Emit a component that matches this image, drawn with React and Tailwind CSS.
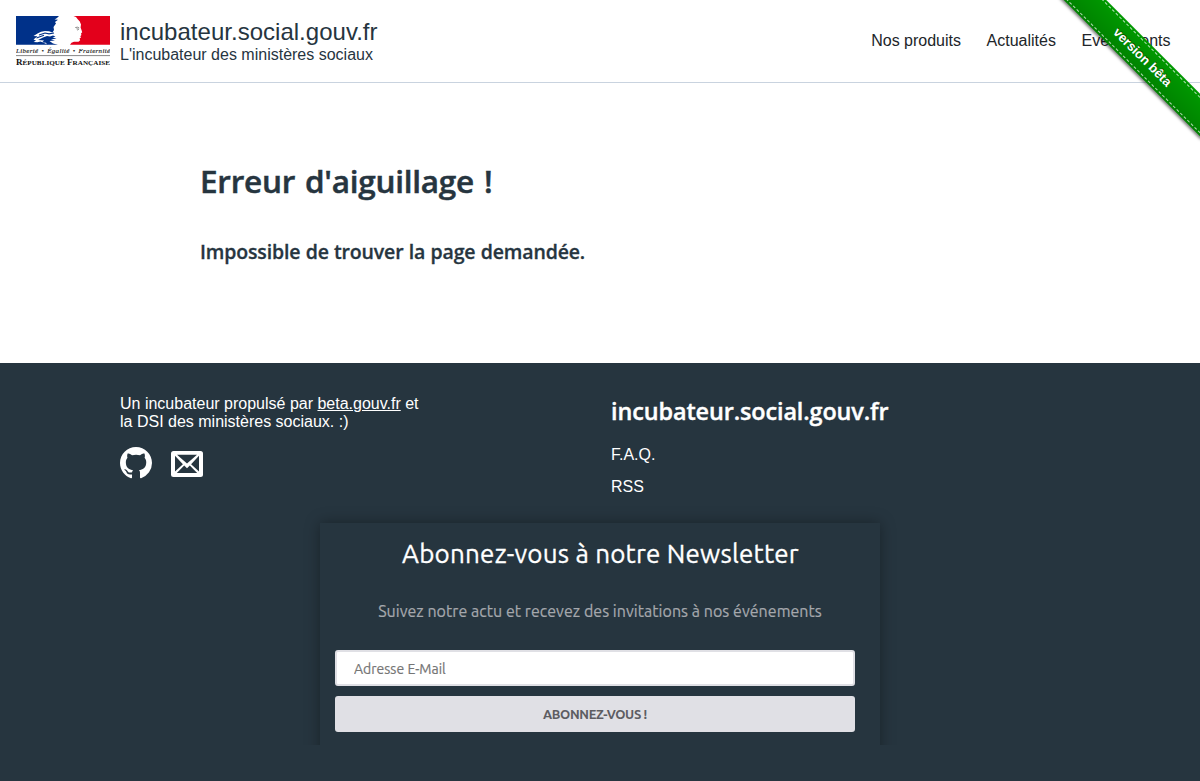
import React from "react";

const sans = "font-['Liberation_Sans',Arial,sans-serif]";
const heading = "font-['Trebuchet_MS','Open_Sans',sans-serif] font-semibold";

function Logo() {
  return (
    <svg width="94" height="51" viewBox="0 0 94 51" className="shrink-0" role="img" aria-label="République Française">
      <path fill="#003189" d="M0 0H43L41 2L38.5 3.5L42 3.8L39 6L40 7.5L37.5 11L38 14L36.5 16.5L33 15.2L29 15L25 15.8L21.5 17.5L17.5 20L21.5 20.3L17.5 23.5L20 24.5L17.5 26L21.5 26.3L24.5 25.5L28 27L32 28.8H0Z" />
      <path fill="#003189" d="M22 24L27 21.5L31 20L34 20.5L37 19.5L39.5 20.5L36.5 21.5L40.5 22.5L35 23.5L39 24.5L33.5 25L37 27.5L42 28.8H31L30 26.8L26 26.5L28 24.5Z" />
      <path fill="none" stroke="#003189" strokeWidth="1.2" d="M23 19L29 17L33 17.8L38 17M20.5 22L28 19.3" />
      <path fill="#e3001b" d="M57.5 0H94V28.8H54L55.5 26.8L58 25.7L62.5 25.7L64.2 24.3L63.5 22.5L65 21.5L64.3 20.2L65.4 19L65 17.5L66.2 16.3L65.5 14L64.6 11.5L65 8.5L63.8 5.5L61.5 3L60 1Z" />
      <path fill="none" stroke="#777" strokeWidth=".9" d="M59.3 11.5L61.5 11.2L63.2 12M60.5 12.8L62.7 13.2L61.5 14.2" />
      <text x="0" y="37" fontFamily="Liberation Serif, serif" fontStyle="italic" fontSize="6.9" wordSpacing="1" textLength="94" stroke="#222" strokeWidth=".15" fill="#222">
        Liberté • Égalité • Fraternité
      </text>
      <path stroke="#555" strokeWidth=".7" d="M0 39.6H94" />
      <text x="0" y="48.9" fontFamily="Liberation Serif, serif" fontWeight="700" fontSize="8.6" textLength="94" lengthAdjust="spacingAndGlyphs" fill="#111">
        R<tspan fontSize="6.8">ÉPUBLIQUE</tspan> F<tspan fontSize="6.8">RANÇAISE</tspan>
      </text>
    </svg>
  );
}

function Ribbon() {
  return (
    <div className="pointer-events-none absolute top-0 right-0 h-[12.1em] w-[12.1em] overflow-hidden text-[13px]">
      <div className="absolute top-[3.23em] right-[-3.23em] box-content h-[1.54em] w-[15.38em] rotate-45 bg-[#009900] bg-linear-to-b from-black/0 to-black/15 py-[0.38em] shadow-[0_0.15em_0.23em_0_rgba(0,0,0,0.5)]" />
      <div className="absolute top-[3.23em] right-[-3.23em] my-[0.15em] box-content h-[1.54em] w-[15.38em] rotate-45 border-y border-dashed border-white/70 py-[0.15em] text-center leading-[1.54em] font-bold text-white [text-indent:1px] [text-shadow:0_-0.08em_rgba(0,0,0,0.5)]">
        version bêta
      </div>
    </div>
  );
}

function Mail() {
  return (
    <svg width="32" height="26" viewBox="0 0 32 26" className="mt-[2px]">
      <rect width="32" height="26" rx="2.5" fill="#fff" />
      <path fill="#26353f" d="M6 3.8H26L16 12.6ZM4 4.8L11.9 13.2L4 20.6ZM28 4.8V20.6L20.1 13.2ZM5.8 22L13.2 14.6L16 17.3L18.8 14.6L26.2 22Z" />
    </svg>
  );
}

function GitHub() {
  return (
    <svg width="32" height="32" viewBox="0 0 16 16" fill="#fff">
      <path d="M8 0C3.58 0 0 3.58 0 8c0 3.54 2.29 6.53 5.47 7.59.4.07.55-.17.55-.38 0-.19-.01-.82-.01-1.49-2.01.37-2.53-.49-2.69-.94-.09-.23-.48-.94-.82-1.13-.28-.15-.68-.52-.01-.53.63-.01 1.08.58 1.23.82.72 1.21 1.87.87 2.33.66.07-.52.28-.87.51-1.07-1.78-.2-3.64-.89-3.64-3.95 0-.87.31-1.59.82-2.15-.08-.2-.36-1.02.08-2.12 0 0 .67-.21 2.2.82.64-.18 1.32-.27 2-.27s1.36.09 2 .27c1.53-1.04 2.2-.82 2.2-.82.44 1.1.16 1.92.08 2.12.51.56.82 1.27.82 2.15 0 3.07-1.87 3.75-3.65 3.95.29.25.54.73.54 1.48 0 1.07-.01 1.93-.01 2.2 0 .21.15.46.55.38A8.01 8.01 0 0 0 16 8c0-4.42-3.58-8-8-8z" />
    </svg>
  );
}

export default function App() {
  return (
    <div className={`${sans} relative flex h-[781px] flex-col overflow-hidden bg-white text-[16px] leading-[18px] text-[#26353f]`}>
      <header className="flex h-[83px] shrink-0 items-start justify-between border-b border-[#c9d3df] pt-4 pr-[29.5px] pl-4">
        <a className="flex gap-[10px]">
          <Logo />
          <div className="pt-[2px]">
            <div className="text-[24px] leading-[28px] tracking-[0.02px]">incubateur.social.gouv.fr</div>
            <div>L'incubateur des ministères sociaux</div>
          </div>
        </a>
        <nav className="flex gap-[25.6px] pt-4 text-[#212529]">
          <a>Nos produits</a>
          <a>Actualités</a>
          <a>Evènements</a>
        </nav>
      </header>
      <Ribbon />
      <main className={`${heading} h-[280px] shrink-0 pt-[77px] pl-[200px]`}>
        <h1 className="text-[31.5px] leading-[42px] tracking-[-0.25px] [word-spacing:2px] [-webkit-text-stroke:0.5px]">Erreur d'aiguillage !</h1>
        <h2 className="mt-[37px] text-[19.5px] leading-[26px] tracking-[-0.15px] [word-spacing:0.4px] [-webkit-text-stroke:0.3px]">Impossible de trouver la page demandée.</h2>
      </main>
      <footer className="flex-1 bg-[#26353f] pt-8 text-white">
        <div className="flex h-[128px] pl-[120px]">
          <div className="w-[491px]">
            <p>
              Un incubateur propulsé par <a className="underline">beta.gouv.fr</a> et
              <br />
              la DSI des ministères sociaux. :)
            </p>
            <div className="mt-4 flex items-center gap-[19px]">
              <GitHub />
              <Mail />
            </div>
          </div>
          <div>
            <h3 className={`${heading} -mt-px text-[23.4px] leading-[34px] tracking-[-0.1px] [-webkit-text-stroke:0.4px]`}>incubateur.social.gouv.fr</h3>
            <p className="mt-[18px]">F.A.Q.</p>
            <p className="mt-[14px]">RSS</p>
          </div>
        </div>
        <div className="mx-auto h-[222px] w-[600px] px-5 font-['Ubuntu','Noto_Sans',sans-serif] [clip-path:inset(-20px_0_0_0)]">
          <form className="h-[280px] bg-[#26353f] pt-[12px] pr-[25px] pl-[15px] shadow-[0_0_14px_rgba(0,0,0,0.35)]">
            <h3 className="-mr-[11px] text-center text-[26px] leading-[38px] tracking-[0.2px] [-webkit-text-stroke:0.3px]">Abonnez-vous à notre Newsletter</h3>
            <p className="mt-[28px] -mr-[10px] text-center text-[16px] leading-[20px] tracking-[0.04px] text-[#a5a8ad] [-webkit-text-stroke:0.2px]">Suivez notre actu et recevez des invitations à nos événements</p>
            <input className="mt-[29px] block h-[36px] w-full rounded-[3px] border-2 border-[#e0e0e5] bg-white px-[17px] pt-[2px] text-[14px] [-webkit-text-stroke:0.2px] placeholder:text-[#757575]" placeholder="Adresse E-Mail" />
            <button type="button" className="mt-[10px] block h-[36px] w-full rounded-[3px] bg-[#e0e0e5] pb-px text-[13px] font-bold tracking-[-0.36px] text-[#5d5d62]">ABONNEZ-VOUS !</button>
          </form>
        </div>
      </footer>
    </div>
  );
}
